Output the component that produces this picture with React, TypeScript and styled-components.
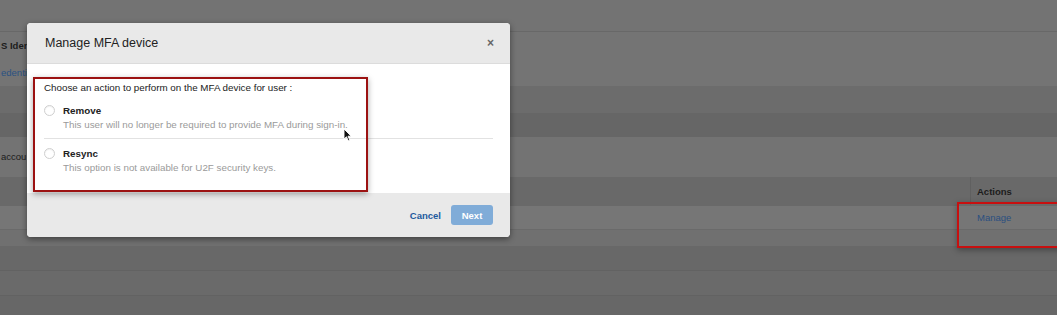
import styled, { createGlobalStyle } from 'styled-components';

const Global = createGlobalStyle`
    html, body {
        margin: 0;
        padding: 0;
        background: #737373;
        font-family: "Liberation Sans", Arial, sans-serif;
    }
`;

const Page = styled.div`
    position: relative;
    width: 1057px;
    height: 315px;
    overflow: hidden;
    display: flex;
    flex-direction: column;
`;

const Row = styled.div<{ h: number; bg: string; line?: string }>`
    height: ${(p) => p.h}px;
    flex: none;
    background: ${(p) => p.bg};
    border-bottom: 1px solid ${(p) => p.line || 'transparent'};
    box-sizing: border-box;
    display: flex;
    align-items: center;
    font-size: 9.5px;
`;

const TableRow = styled(Row)`
    display: grid;
    grid-template-columns: 1fr 87px;
    align-items: stretch;
`;

const Cell = styled.div<{ sep?: boolean }>`
    display: flex;
    align-items: center;
    padding-left: 6px;
    border-left: 1px solid ${(p) => (p.sep ? '#606060' : 'transparent')};
`;

// the dialog hides the rest of these labels
const PageText = styled.span<{ link?: boolean; bold?: boolean }>`
    margin-left: -6px;
    color: ${(p) => (p.link ? '#2b5283' : '#1c1c1c')};
    font-weight: ${(p) => (p.bold ? 700 : 400)};
    white-space: nowrap;
`;

const ColHead = styled.span`
    color: #1c1c1c;
    font-weight: 700;
    font-size: 9.5px;
`;

const ManageLink = styled.span`
    color: #2b4f80;
    font-size: 9.5px;
`;

const Highlight = styled.div`
    position: absolute;
    left: 957px;
    top: 202px;
    width: 110px;
    height: 46px;
    box-sizing: border-box;
    border: 2px solid #c80f0f;
    box-shadow: 0 2px 6px rgba(0, 0, 0, 0.35);
`;

const Modal = styled.div`
    position: absolute;
    left: 27px;
    top: 23px;
    width: 483px;
    height: 214px;
    border-radius: 4px;
    overflow: hidden;
    background: #fff;
    box-shadow: 0 2px 6px rgba(0, 0, 0, 0.45);
    display: flex;
    flex-direction: column;
`;

const Header = styled.div`
    height: 41px;
    flex: none;
    box-sizing: border-box;
    background: #e9e9e9;
    border-bottom: 1px solid #dcdcdc;
    display: flex;
    align-items: center;
    justify-content: space-between;
    padding: 0 16px 0 18px;
`;

const Title = styled.h2`
    margin: 0;
    font-size: 12.5px;
    font-weight: 400;
    color: #222;
`;

const Close = styled.span`
    font-size: 12px;
    font-weight: 700;
    color: #666;
`;

const Body = styled.div`
    position: relative;
    flex: 1;
    padding: 18px 17px 0 17px;
    background: #fff;
`;

const Prompt = styled.div`
    font-size: 9.8px;
    line-height: 12px;
    color: #222;
    margin-bottom: 9px;
`;

const Option = styled.div<{ divider?: boolean }>`
    display: flex;
    gap: 8px;
    padding: ${(p) => (p.divider ? '1px 0 6px' : '8px 0 0')};
    border-bottom: 1px solid ${(p) => (p.divider ? '#e2e2e2' : 'transparent')};
`;

const Radio = styled.span`
    width: 11px;
    height: 11px;
    margin-top: 1px;
    flex: none;
    box-sizing: border-box;
    border-radius: 50%;
    border: 1px solid #cfcfcf;
    background: #fff;
    box-shadow: inset 0 1px 1px rgba(0, 0, 0, 0.06);
`;

const OptText = styled.div`
    display: flex;
    flex-direction: column;
    font-size: 9.8px;
    line-height: 14px;
`;

const OptLabel = styled.span`
    font-weight: 700;
    color: #222;
`;

const OptDesc = styled.span`
    color: #9a9a9a;
`;

const Annotation = styled.div`
    position: absolute;
    left: 6px;
    top: 13px;
    width: 335px;
    height: 115px;
    box-sizing: border-box;
    border: 2px solid #9c1212;
    box-shadow: 0 2px 6px rgba(0, 0, 0, 0.35);
    pointer-events: none;
`;

const Cursor = styled.svg`
    position: absolute;
    left: 316px;
    top: 64px;
`;

const Footer = styled.div`
    height: 44px;
    flex: none;
    background: #e9e9e9;
    display: flex;
    align-items: center;
    justify-content: flex-end;
    gap: 10px;
    padding-right: 17px;
`;

const CancelBtn = styled.span`
    color: #1e5b9e;
    font-weight: 700;
    font-size: 9.5px;
`;

const NextBtn = styled.span`
    width: 42px;
    height: 20px;
    border-radius: 3px;
    background: #80acd8;
    color: #fff;
    font-weight: 700;
    font-size: 9.5px;
    display: flex;
    align-items: center;
    justify-content: center;
`;

export default function App() {
    return (
        <>
            <Global />
            <Page>
                <Row h={32} bg="#737373" line="#686868" />
                <Row h={28} bg="#747474">
                    <Cell><PageText bold>S Iden</PageText></Cell>
                </Row>
                <Row h={26} bg="#747474">
                    <Cell><PageText link>edenti</PageText></Cell>
                </Row>
                <Row h={27} bg="#6c6c6c" />
                <Row h={24} bg="#666666" />
                <Row h={40} bg="#737373">
                    <Cell><PageText>accou</PageText></Cell>
                </Row>
                <TableRow h={29} bg="#696969">
                    <Cell />
                    <Cell sep><ColHead>Actions</ColHead></Cell>
                </TableRow>
                <TableRow h={24} bg="#767676" line="#6a6a6a">
                    <Cell />
                    <Cell><ManageLink>Manage</ManageLink></Cell>
                </TableRow>
                <Row h={16} bg="#707070" />
                <Row h={25} bg="#686868" line="#626262" />
                <Row h={25} bg="#6a6a6a" line="#626262" />
                <Row h={20} bg="#676767" />

                <Highlight />

                <Modal>
                    <Header>
                        <Title>Manage MFA device</Title>
                        <Close>×</Close>
                    </Header>
                    <Body>
                        <Prompt>Choose an action to perform on the MFA device for user :</Prompt>
                        <Option divider>
                            <Radio />
                            <OptText>
                                <OptLabel>Remove</OptLabel>
                                <OptDesc>This user will no longer be required to provide MFA during sign-in.</OptDesc>
                            </OptText>
                        </Option>
                        <Option>
                            <Radio />
                            <OptText>
                                <OptLabel>Resync</OptLabel>
                                <OptDesc>This option is not available for U2F security keys.</OptDesc>
                            </OptText>
                        </Option>
                        <Annotation />
                        <Cursor width="9" height="14" viewBox="0 0 9 14">
                            <path d="M1 1 L1 11 L3.5 8.8 L5.3 12.8 L6.8 12.1 L5 8.2 L8.2 8.2 Z" fill="#111" stroke="#fff" strokeWidth="0.9" />
                        </Cursor>
                    </Body>
                    <Footer>
                        <CancelBtn>Cancel</CancelBtn>
                        <NextBtn>Next</NextBtn>
                    </Footer>
                </Modal>
            </Page>
        </>
    );
}
